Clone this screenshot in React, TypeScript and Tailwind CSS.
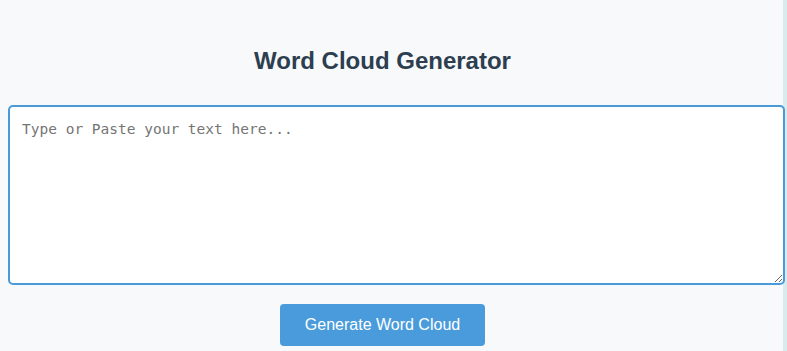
export default function App() {
  return (
    <div className="flex h-[351px] w-[787px] overflow-hidden bg-[#f7f9fb]">
      <div className="flex w-[783px] shrink-0 flex-col">
        <div className="flex w-[765px] flex-col items-center">
          <h1 className="mt-[46px] text-[24px] font-bold leading-[30px] text-[#2c3e50]" style={{ fontFamily: '"Liberation Sans", Arial, sans-serif' }}>
            Word Cloud Generator
          </h1>
        </div>
        <div className="relative z-10 mt-[29px] w-full pl-[8px]">
          <textarea
            className="block h-[180px] w-[777px] resize rounded-[5px] border-2 border-[#4a9ad9] bg-white px-[12px] py-[12px] text-[14.5px] leading-[20px] text-[#333] outline-none placeholder:text-[#757575]"
            style={{ fontFamily: '"DejaVu Sans Mono", "Liberation Mono", monospace' }}
            placeholder="Type or Paste your text here..."
          />
        </div>
        <div className="flex w-[765px] justify-center">
          <button
            className="mt-[19px] h-[42px] w-[205px] rounded-[4px] bg-[#4a9bdc] text-[16px] text-white"
            style={{ fontFamily: '"Liberation Sans", Arial, sans-serif' }}
          >
            Generate Word Cloud
          </button>
        </div>
      </div>
      <div className="w-[4px] shrink-0 bg-[#d8ecee]" />
    </div>
  );
}
